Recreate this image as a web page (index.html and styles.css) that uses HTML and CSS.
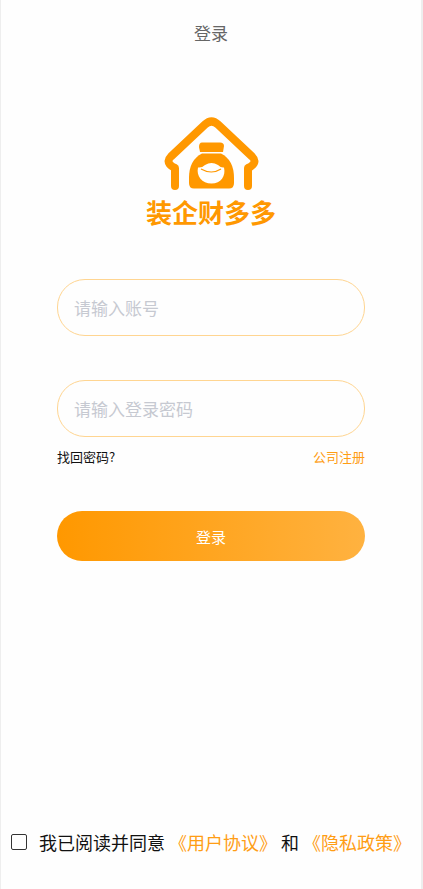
FILE: index.html
```html
<!DOCTYPE html>
<html lang="zh-CN">
<head>
<meta charset="utf-8">
<meta name="viewport" content="width=device-width, initial-scale=1">
<title>登录</title>
<link rel="stylesheet" href="styles.css">
</head>
<body>
<div class="page">
  <header class="header"><h1 class="title">登录</h1></header>
  <main class="main">
    <div class="brand">
      <svg class="brand-icon" viewBox="0 0 96 74" aria-hidden="true">
        <path d="M12 70V52Q5.500 49 5.500 45Q5.500 43 8 40.500L42 8.500Q48.500 2.500 55 8.500L89 40.500Q91.500 43 91.500 45Q91.500 49 85 52V70" fill="none" stroke="#ff9800" stroke-width="8" stroke-linecap="round" stroke-linejoin="round"/>
        <path d="M39 26.500H57Q61 26.500 61 30L60 36H37L36 31Q36 26.500 39 26.500Z" fill="#ff9800"/>
        <path d="M39 37.500H58Q71 44 71 62V67Q71 72.500 66 72.500H31Q26 72.500 26 67V62Q26 44 39 37.500Z" fill="#ff9800"/>
        <path d="M35 51.500Q39 52 42 49Q48.500 45 55 49Q58 52 61 51.500C63 60 58 67.500 48.500 67.500S33 60 35 51.500Z" fill="#fff"/>
        <path d="M38 53Q48.500 59 58 53" fill="none" stroke="#ff9800" stroke-width="1.200"/>
      </svg>
      <p class="brand-name">装企财多多</p>
    </div>
    <form class="form">
      <input class="field" type="text" placeholder="请输入账号" aria-label="账号">
      <input class="field" type="password" placeholder="请输入登录密码" aria-label="登录密码">
      <div class="links">
        <a class="link-recover" href="#">找回密码?</a>
        <a class="link-accent" href="#">公司注册</a>
      </div>
      <button class="submit" type="button">登录</button>
    </form>
  </main>
  <footer class="agreement">
    <input class="check" type="checkbox" id="agree">
    <div class="terms">
      <label for="agree">我已阅读并同意</label>
      <a class="link-accent" href="#">《用户协议》</a>
      <span>和</span>
      <a class="link-accent" href="#">《隐私政策》</a>
    </div>
  </footer>
</div>
</body>
</html>
```
FILE: styles.css
```css
* {
  box-sizing: border-box;
}

body {
  margin: 0;
  background: #fefefe;
  color: #111;
  font-family: "Noto Sans CJK SC", sans-serif;
}

.page {
  display: flex;
  flex-direction: column;
  min-height: 100vh;
  border-left: 1px solid #eee;
  border-right: 2px solid #eee;
}

.header {
  padding: 20px 0;
  text-align: center;
}

.title {
  margin: 0;
  color: #666;
  font-size: 17px;
  font-weight: 400;
  line-height: 26px;
}

.main {
  flex: 1;
  padding: 50px 56px 0;
}

.brand {
  display: flex;
  flex-direction: column;
  align-items: center;
}

.brand-icon {
  width: 96px;
  height: 74px;
}

.brand-name {
  margin: 6px 0 0;
  color: #ff9800;
  font-size: 26px;
  font-weight: 700;
  line-height: 32px;
}

.form {
  display: flex;
  flex-direction: column;
  margin-top: 51px;
}

.field {
  width: 100%;
  height: 57px;
  margin: 0 0 44px;
  padding: 0 16px;
  border: 1px solid #ffd591;
  border-radius: 28px;
  background: #fefefe;
  color: #333;
  font-family: inherit;
  font-size: 17px;
}

.field::placeholder {
  color: #c6c9d1;
  opacity: 1;
}

.links {
  display: flex;
  justify-content: space-between;
  margin-top: -34px;
  font-size: 13px;
  line-height: 20px;
}

a {
  text-decoration: none;
}

.link-recover {
  color: #111;
}

.link-accent {
  color: #ff9d14;
}

.submit {
  height: 50px;
  margin-top: 44px;
  padding: 0;
  border: 0;
  border-radius: 25px;
  background: linear-gradient(90deg, #ff9800, #ffb240);
  color: #fff;
  font-family: inherit;
  font-size: 15px;
}

.agreement {
  display: flex;
  align-items: center;
  gap: 12px;
  padding: 0 10px 33px;
  font-size: 18px;
  line-height: 28px;
}

.check {
  flex: none;
  width: 16px;
  height: 16px;
  margin: 0;
  border: 1px solid #333;
  border-radius: 2px;
  appearance: none;
}

.check:checked {
  background: #ff9800;
}

.terms {
  display: flex;
  gap: 4px;
  white-space: nowrap;
}
```
